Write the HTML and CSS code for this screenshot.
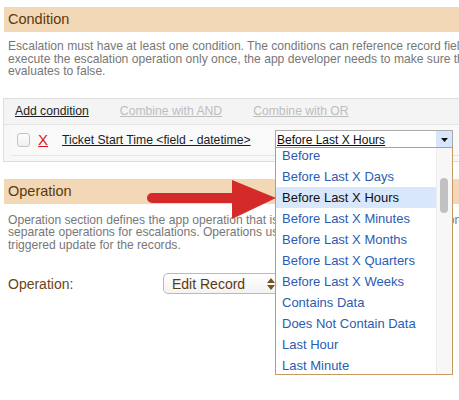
FILE: index.html
```html
<!DOCTYPE html>
<html>
<head>
<meta charset="utf-8">
<link rel="stylesheet" href="styles.css">
</head>
<body>
<div class="page">
  <div class="section-head">Condition</div>
  <div class="desc">
    <div>Escalation must have at least one condition. The conditions can reference record fields and the app developer</div>
    <div>execute the escalation operation only once, the app developer needs to make sure that the condition</div>
    <div>evaluates to false.</div>
  </div>
  <div class="cond-box">
    <div class="cond-actions">
      <span class="link-main">Add condition</span>
      <span class="link-dis and">Combine with AND</span>
      <span class="link-dis or">Combine with OR</span>
    </div>
    <div class="cond-row">
      <span class="checkbox"></span>
      <span class="remove">X</span>
      <span class="field">Ticket Start Time &lt;field - datetime&gt;</span>
      <span class="select">
        <span class="select-text">Before Last X Hours</span>
        <span class="select-btn"><svg width="7" height="4" viewBox="0 0 7 4"><path d="M0 0h7L3.5 4z" fill="#111"/></svg></span>
      </span>
    </div>
  </div>

  <div class="section-head op-head">Operation</div>
  <div class="desc op-desc">
    <div>Operation section defines the app operation that is run when the escalation conditions are met by a record.</div>
    <div>separate operations for escalations. Operations use the same list as</div>
    <div>triggered update for the records.</div>
  </div>
  <div class="op-row">
    <span class="op-label">Operation:</span>
    <span class="op-select">
      <span>Edit Record</span>
      <svg class="updown" width="8" height="12" viewBox="0 0 8 12"><path d="M4 0L8 5H0z M4 12L0 7h8z" fill="#7a5420"/></svg>
    </span>
  </div>
</div>

<div class="dropdown">
  <ul class="options">
    <li>Before</li>
    <li>Before Last X Days</li>
    <li class="active">Before Last X Hours</li>
    <li>Before Last X Minutes</li>
    <li>Before Last X Months</li>
    <li>Before Last X Quarters</li>
    <li>Before Last X Weeks</li>
    <li>Contains Data</li>
    <li>Does Not Contain Data</li>
    <li>Last Hour</li>
    <li>Last Minute</li>
  </ul>
  <div class="scrollbar"><div class="thumb"></div></div>
</div>

<svg class="arrow" width="134" height="48" viewBox="0 0 134 48">
  <rect x="2" y="17" width="92" height="10" rx="5" fill="#d42a2a"/>
  <polygon points="87,4 131,22 87,43" fill="#d42a2a"/>
</svg>
</body>
</html>
```

FILE: styles.css
```css
html, body {
  margin: 0;
  padding: 0;
  width: 459px;
  height: 400px;
  overflow: hidden;
  background: #fff;
  font-family: "Liberation Sans", Arial, sans-serif;
  position: relative;
}

.page {
  width: 760px;
  padding: 7px 0 0 4px;
}

.section-head {
  height: 25px;
  line-height: 25px;
  background: #f2d8b6;
  color: #5b3a0e;
  font-size: 14.5px;
  padding-left: 4px;
}

.desc {
  padding: 8px 0 0 4px;
  font-size: 12.1px;
  line-height: 12.5px;
  color: #777;
  white-space: nowrap;
}

.cond-box {
  margin: 20px 0 0 -1px;
  border: 1px solid #dedede;
  background: #f7f7f7;
  padding-bottom: 5px;
}

.cond-actions {
  height: 25px;
  display: flex;
  align-items: center;
  font-size: 12.2px;
  background: #f4f4f4;
  border-bottom: 1px solid #e4e4e4;
}

.link-main {
  margin-left: 11px;
  color: #1e1e1e;
  text-decoration: underline;
}

.link-dis {
  color: #bdbdbd;
  text-decoration: underline;
}

.and { margin-left: 31px; }
.or { margin-left: 31px; }

.cond-row {
  height: 30px;
  margin-left: 8px;
  display: flex;
  align-items: center;
  border-bottom: 1px solid #e6e6e6;
  background: #f9f9f9;
  font-size: 12.2px;
}

.checkbox {
  width: 11px;
  height: 12px;
  border: 1px solid #c4c4c4;
  border-radius: 3px;
  background: linear-gradient(#fdfdfd, #f0f0f0);
  margin-left: 5px;
  flex-shrink: 0;
}

.remove {
  margin-left: 8px;
  width: 10px;
  color: #d8161b;
  font-size: 15px;
  text-decoration: underline;
  flex-shrink: 0;
}

.field {
  margin-left: 14px;
  width: 213px;
  flex-shrink: 0;
  color: #1e1e1e;
  text-decoration: underline;
  white-space: nowrap;
}

.select {
  width: 176px;
  height: 18px;
  border: 1px solid #a9a9a9;
  background: #fff;
  display: flex;
  align-items: center;
  flex-shrink: 0;
}

.select-text {
  flex: 1;
  padding-left: 1px;
  color: #111;
  text-decoration: underline;
  font-size: 12px;
}

.select-btn {
  width: 16px;
  height: 18px;
  background: #d7e6fa;
  display: flex;
  align-items: center;
  justify-content: center;
}

.op-head {
  margin-top: 17px;
}

.op-desc {
  padding-top: 10px;
}

.op-row {
  display: flex;
  align-items: center;
  margin-top: 22px;
  padding-left: 4px;
}

.op-label {
  width: 155px;
  font-size: 14px;
  color: #6a4516;
}

.op-select {
  width: 130px;
  height: 19px;
  border: 1px solid #b9b9b9;
  border-radius: 5px;
  background: linear-gradient(#ffffff, #f3f3f3);
  display: flex;
  align-items: center;
  padding-left: 8px;
  font-size: 14px;
  color: #5b3a0e;
}

.updown {
  margin-left: 22px;
}

.dropdown {
  position: absolute;
  left: 275px;
  top: 147px;
  width: 176px;
  height: 226px;
  border: 1px solid #c99a60;
  background: #fff;
  overflow: hidden;
  display: flex;
}

.options {
  list-style: none;
  margin: -3px 0 0 0;
  padding: 0;
  flex: 1;
}

.options li {
  height: 21px;
  line-height: 21px;
  padding-left: 6px;
  font-size: 13px;
  color: #2b5cb3;
  white-space: nowrap;
}

.options li.active {
  background: #d8e7fb;
  color: #111;
}

.scrollbar {
  width: 15px;
  background: #f7f7f7;
  border-left: 1px solid #ededed;
  position: relative;
}

.thumb {
  position: absolute;
  left: 3px;
  top: 30px;
  width: 8px;
  height: 35px;
  border-radius: 4px;
  background: #c1c1c1;
}

.arrow {
  position: absolute;
  left: 145px;
  top: 176px;
}
```
